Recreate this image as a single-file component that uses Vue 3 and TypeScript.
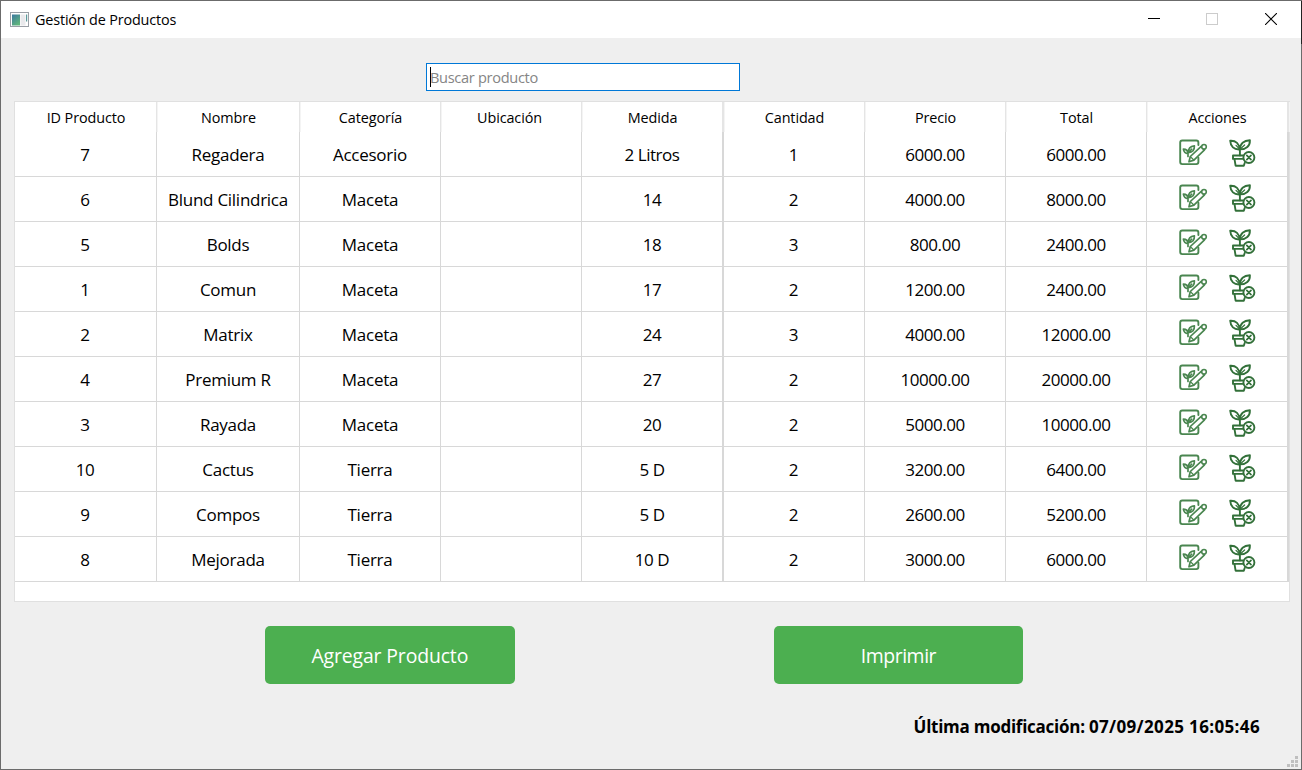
<script setup lang="ts">
interface Producto {
  id: number
  nombre: string
  categoria: string
  ubicacion: string
  medida: string
  cantidad: number
  precio: string
  total: string
}

const columnas: string[] = [
  'ID Producto', 'Nombre', 'Categoría', 'Ubicación', 'Medida',
  'Cantidad', 'Precio', 'Total', 'Acciones',
]

const productos: Producto[] = [
  { id: 7, nombre: 'Regadera', categoria: 'Accesorio', ubicacion: '', medida: '2 Litros', cantidad: 1, precio: '6000.00', total: '6000.00' },
  { id: 6, nombre: 'Blund Cilindrica', categoria: 'Maceta', ubicacion: '', medida: '14', cantidad: 2, precio: '4000.00', total: '8000.00' },
  { id: 5, nombre: 'Bolds', categoria: 'Maceta', ubicacion: '', medida: '18', cantidad: 3, precio: '800.00', total: '2400.00' },
  { id: 1, nombre: 'Comun', categoria: 'Maceta', ubicacion: '', medida: '17', cantidad: 2, precio: '1200.00', total: '2400.00' },
  { id: 2, nombre: 'Matrix', categoria: 'Maceta', ubicacion: '', medida: '24', cantidad: 3, precio: '4000.00', total: '12000.00' },
  { id: 4, nombre: 'Premium R', categoria: 'Maceta', ubicacion: '', medida: '27', cantidad: 2, precio: '10000.00', total: '20000.00' },
  { id: 3, nombre: 'Rayada', categoria: 'Maceta', ubicacion: '', medida: '20', cantidad: 2, precio: '5000.00', total: '10000.00' },
  { id: 10, nombre: 'Cactus', categoria: 'Tierra', ubicacion: '', medida: '5 D', cantidad: 2, precio: '3200.00', total: '6400.00' },
  { id: 9, nombre: 'Compos', categoria: 'Tierra', ubicacion: '', medida: '5 D', cantidad: 2, precio: '2600.00', total: '5200.00' },
  { id: 8, nombre: 'Mejorada', categoria: 'Tierra', ubicacion: '', medida: '10 D', cantidad: 2, precio: '3000.00', total: '6000.00' },
]
</script>

<template>
  <div class="window">
    <header class="titlebar">
      <svg class="app-icon" width="19" height="16" viewBox="0 0 19 16">
        <defs>
          <linearGradient id="appBlue" x1="0" y1="0" x2="0.6" y2="1">
            <stop offset="0" stop-color="#3c78a0" />
            <stop offset="1" stop-color="#5fb57c" />
          </linearGradient>
        </defs>
        <rect x="0.5" y="0.5" width="18" height="14" fill="#fff" stroke="#9a9fa6" />
        <rect x="2" y="2.5" width="8" height="11" fill="url(#appBlue)" />
        <rect x="10.5" y="2.5" width="5" height="11" fill="#e9e9ec" />
        <rect x="16" y="2.5" width="1.2" height="7" fill="#5b9a9c" />
      </svg>
      <span class="title">Gestión de Productos</span>
      <div class="controls">
        <svg width="12" height="12" viewBox="0 0 12 12"><path d="M0 5.5H12" stroke="#000" /></svg>
        <svg width="12" height="12" viewBox="0 0 12 12"><rect x="0.5" y="0.5" width="11" height="11" fill="none" stroke="#ccc" /></svg>
        <svg class="close" width="12" height="12" viewBox="0 0 12 12"><path d="M0 0L12 12M12 0L0 12" stroke="#000" stroke-width="1.1" /></svg>
      </div>
    </header>

    <main class="content">
      <div class="search"><i class="caret"></i><span>Buscar producto</span></div>

      <div class="table">
        <div class="row head">
          <div v-for="c in columnas" :key="c" class="cell">{{ c }}</div>
        </div>
        <div v-for="p in productos" :key="p.id" class="row body">
          <div class="cell">{{ p.id }}</div>
          <div class="cell word">{{ p.nombre }}</div>
          <div class="cell word">{{ p.categoria }}</div>
          <div class="cell">{{ p.ubicacion }}</div>
          <div class="cell">{{ p.medida }}</div>
          <div class="cell">{{ p.cantidad }}</div>
          <div class="cell">{{ p.precio }}</div>
          <div class="cell">{{ p.total }}</div>
          <div class="cell actions">
            <svg width="30" height="30" viewBox="0 0 30 30" fill="none" stroke="#4a8650" stroke-width="1.9" stroke-linejoin="round" stroke-linecap="round">
              <path d="M20.4 7V4.6Q20.4 2.5 18.3 2.5H4.3Q2.2 2.5 2.2 4.6V24Q2.2 26.1 4.3 26.1H18.3Q20.4 26.1 20.4 24V19.8" />
              <path d="M10.4 14.6C10.2 10.6 12.2 8.2 16.4 7.8C16.6 12 14.6 14.6 10.4 14.6ZM10 15.6C7.6 15.6 5.8 14.2 5.4 11.2C8.2 11.2 9.8 12.6 10 15.6V18.4M10.2 15L13.6 11.2" stroke-width="1.7" />
              <path d="M11 23.8L12.3 18.5L23.2 8.4L26.5 11.9L15.9 22.1Z" fill="#fff" stroke-width="1.7" />
              <path d="M12.4 18.6L15.8 22" stroke-width="1.3" />
              <circle cx="26" cy="8.8" r="2.3" fill="#fff" stroke-width="1.6" />
            </svg>
            <svg width="30" height="30" viewBox="0 0 30 30" fill="none" stroke="#327039" stroke-width="1.9" stroke-linejoin="round" stroke-linecap="round">
              <path d="M11.7 11.4C6 11.8 2.5 8.4 2.2 2.8C8 2.4 11.4 5.8 11.7 11.4ZM12 11.4C12 5.8 15.8 2.4 21.9 2.2C22.1 8 18.2 11.4 12 11.4ZM11.9 11.4V17.4" />
              <path d="M8 7.4L11.9 11.4L16.6 7" stroke-width="1.2" />
              <path d="M15 17.5H5V20.9H14.4M6.5 21.1L7.6 27.7H15.8L16.7 25" />
              <circle cx="20.9" cy="19.5" r="5.5" />
              <path d="M18.8 17.4L23 21.6M23 17.4L18.8 21.6" stroke-width="1.7" />
            </svg>
          </div>
        </div>
      </div>

      <div class="buttons">
        <button type="button" class="add">Agregar Producto</button>
        <button type="button">Imprimir</button>
      </div>

      <div class="modified">Última modificación: <span class="stamp">07/09/2025 16:05:46</span></div>
    </main>

    <svg class="grip" width="11" height="11" viewBox="0 0 11 11" fill="#bfbfbf">
      <path d="M8 0h3v3h-3zM4 4h3v3h-3zM8 4h3v3h-3zM0 8h3v3h-3zM4 8h3v3h-3zM8 8h3v3h-3z" />
    </svg>
  </div>
</template>

<style>
body {
  margin: 0;
  overflow: hidden;
}
</style>

<style scoped>
.window {
  position: relative;
  box-sizing: border-box;
  width: 1302px;
  height: 770px;
  border: 1px solid #6b6b6b;
  background: #efefef;
  color: #000;
  font-family: "Open Sans", "Noto Sans", sans-serif;
}
/* darker stretch of the frame beside the title bar */
.window::after {
  content: "";
  position: absolute;
  top: 0;
  right: -1px;
  width: 1px;
  height: 43px;
  background: #222;
}
.titlebar {
  display: flex;
  align-items: center;
  height: 37px;
  padding-left: 9px;
  background: #fff;
}
.title {
  margin-left: 6px;
  font-size: 14.4px;
  letter-spacing: -0.16px;
}
.controls {
  display: flex;
  gap: 46px;
  margin: -1px 0 0 auto;
  padding-right: 24px;
}
.controls svg {
  display: block;
}
.controls .close {
  margin-left: 1px;
}
.content {
  display: flex;
  flex-direction: column;
  padding: 25px 11px 0 13px;
}
.search {
  display: flex;
  align-items: center;
  box-sizing: border-box;
  width: 314px;
  height: 28px;
  margin-left: 412px;
  padding-left: 3px;
  border: 1px solid #0078d7;
  background: #fff;
  color: #858585;
  font-size: 14.6px;
  letter-spacing: -0.32px;
}
.caret {
  width: 1px;
  height: 20px;
  margin-right: -1px;
  background: #000;
}
.table {
  box-sizing: border-box;
  width: 1276px;
  height: 501px;
  margin-top: 10px;
  border: 1px solid #e0e0e0;
  background: #fff;
}
.row {
  display: grid;
  grid-template-columns: 142px 143px 141px 141px 142px 141px 141px 141px 142px;
}
.cell {
  display: flex;
  align-items: center;
  justify-content: center;
  box-sizing: border-box;
  border-right: 1px solid #d8d8d8;
  white-space: nowrap;
}
.cell:nth-child(5),
.cell:nth-child(9) {
  border-right-width: 2px;
}
.head {
  height: 30px;
  font-size: 14.4px;
  letter-spacing: -0.1px;
}
.head .cell {
  padding-left: 1px;
  border-right-color: #e5e5e5;
  box-shadow: 1px 0 #f4f4f4;
}
.head .cell:nth-child(4) {
  padding-right: 4px;
}
.body {
  height: 45px;
  font-size: 17px;
  letter-spacing: -0.45px;
}
.body .cell {
  border-bottom: 1px solid #d8d8d8;
}
.body .cell:nth-child(1),
.body .cell:nth-child(6) {
  padding-right: 1px;
}
.body .word {
  letter-spacing: -0.27px;
}
.body .actions {
  gap: 20px;
  padding: 0 0 2px 2px;
}
.actions svg {
  display: block;
  flex: none;
}
.buttons {
  display: flex;
  gap: 259px;
  margin: 24px 0 0 251px;
}
.buttons button {
  width: 249.6px;
  height: 58px;
  padding: 0;
  border: 0;
  border-radius: 5px;
  background: #4caf50;
  color: #fff;
  font-family: inherit;
  font-size: 19.4px;
  letter-spacing: -0.42px;
}
.buttons .add {
  letter-spacing: -0.12px;
}
.modified {
  margin: 31px 30px 0 0;
  font-size: 17px;
  font-weight: 700;
  line-height: 24px;
  letter-spacing: -0.26px;
  text-align: right;
}
.stamp {
  letter-spacing: 0.36px;
}
.grip {
  position: absolute;
  right: 3px;
  bottom: 2px;
}
</style>
